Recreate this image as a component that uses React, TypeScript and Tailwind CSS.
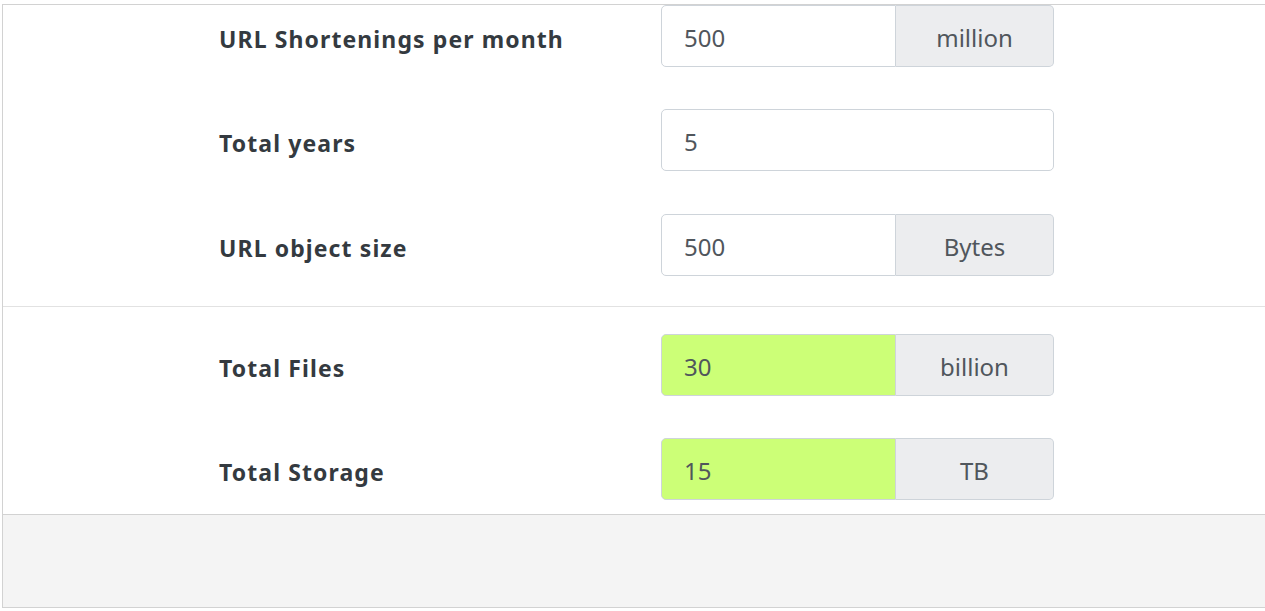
import React from 'react';

type Row = { label: string; value: string; unit?: string; result?: boolean };

const inputs: Row[] = [
  { label: 'URL Shortenings per month', value: '500', unit: 'million' },
  { label: 'Total years', value: '5' },
  { label: 'URL object size', value: '500', unit: 'Bytes' },
];

const results: Row[] = [
  { label: 'Total Files', value: '30', unit: 'billion', result: true },
  { label: 'Total Storage', value: '15', unit: 'TB', result: true },
];

function FieldRow({ row }: { row: Row }) {
  return (
    <div className="flex items-center h-[62px]">
      <div className="shrink-0 w-[658px] pl-[216px] pt-[7px] text-[23px] tracking-[1.1px] font-bold text-[#343a40] whitespace-nowrap">
        {row.label}
      </div>
      <div className="flex shrink-0 w-[393px] h-[62px]">
        <div
          className={`flex items-center flex-1 pl-[22px] pt-[3px] text-[24px] text-[#50565c] border border-[#ced4da] ${
            row.unit ? 'rounded-l-[5px]' : 'rounded-[5px]'
          } ${row.result ? 'bg-[#ccff77]' : 'bg-white'}`}
        >
          {row.value}
        </div>
        {row.unit && (
          <div className="flex items-center justify-center shrink-0 w-[158px] pt-[3px] text-[24px] text-[#50565c] bg-[#ecedef] border border-l-0 border-[#ced4da] rounded-r-[5px]">
            {row.unit}
          </div>
        )}
      </div>
    </div>
  );
}

export default function App() {
  return (
    <div className="w-[1265px] h-[611px] overflow-hidden bg-white" style={{ fontFamily: '"Noto Sans", "Open Sans", sans-serif' }}>
      <div className="ml-[2px] mt-[4px] w-[1280px] border border-[#d2d2d2]">
        <div className="flex flex-col pb-[30px]">
          <FieldRow row={inputs[0]} />
          <div className="mt-[42px]">
            <FieldRow row={inputs[1]} />
          </div>
          <div className="mt-[43px]">
            <FieldRow row={inputs[2]} />
          </div>
        </div>
        <div className="flex flex-col gap-[42px] border-t border-[#e2e2e2] pt-[27px] pb-[14px]">
          {results.map((r) => (
            <FieldRow key={r.label} row={r} />
          ))}
        </div>
        <div className="h-[93px] border-t border-[#d2d2d2] bg-[#f4f4f4]" />
      </div>
    </div>
  );
}
